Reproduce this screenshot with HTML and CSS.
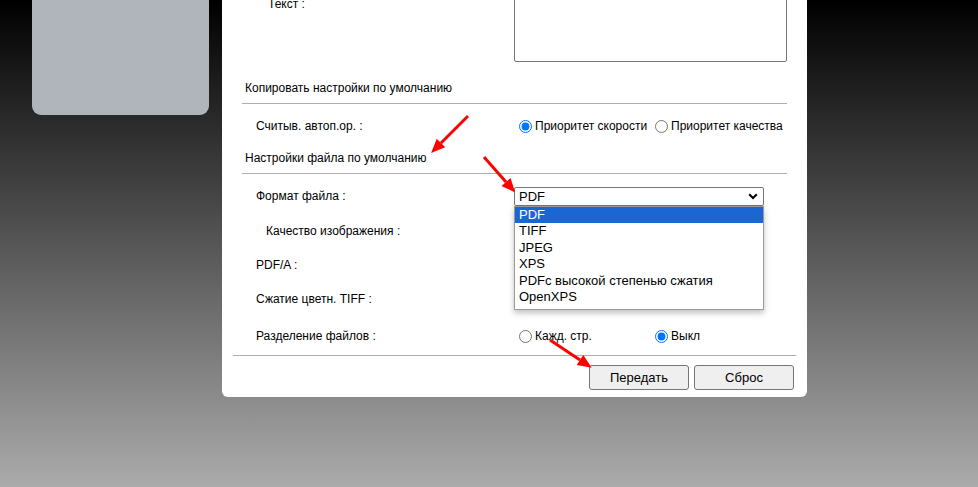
FILE: index.html
```html
<!DOCTYPE html>
<html lang="ru">
<head>
<meta charset="utf-8">
<title>Настройки</title>
<link rel="stylesheet" href="styles.css">
</head>
<body>
<div class="page">
  <aside class="side"></aside>
  <main class="panel">
    <div class="row row-text">
      <span class="lbl lbl-text">Текст :</span>
      <textarea class="ta"></textarea>
    </div>
    <div class="sect sect-1">Копировать настройки по умолчанию</div>
    <div class="row r-auto">
      <span class="lbl">Считыв. автоп.ор. :</span>
      <div class="opts">
        <label class="opt"><input type="radio" name="auto" checked>Приоритет скорости</label>
        <label class="opt"><input type="radio" name="auto">Приоритет качества</label>
      </div>
    </div>
    <div class="sect sect-2">Настройки файла по умолчанию</div>
    <div class="row r-fmt">
      <span class="lbl">Формат файла :</span>
      <div class="sel-wrap">
        <div class="sel">
          <span>PDF</span>
          <svg class="chev" width="10" height="7" viewBox="0 0 10 7"><path d="M1.2 1.2 L5 5 L8.8 1.2" fill="none" stroke="#000" stroke-width="2"/></svg>
        </div>
        <ul class="list">
          <li class="on">PDF</li>
          <li>TIFF</li>
          <li>JPEG</li>
          <li>XPS</li>
          <li>PDFc высокой степенью сжатия</li>
          <li>OpenXPS</li>
        </ul>
      </div>
    </div>
    <div class="row r-qual"><span class="lbl lbl-sub">Качество изображения :</span></div>
    <div class="row r-pdfa"><span class="lbl">PDF/A :</span></div>
    <div class="row r-tiff"><span class="lbl">Сжатие цветн. TIFF :</span></div>
    <div class="row r-split">
      <span class="lbl">Разделение файлов :</span>
      <div class="opts">
        <label class="opt"><input type="radio" name="split">Кажд. стр.</label>
        <label class="opt"><input type="radio" name="split" checked>Выкл</label>
      </div>
    </div>
    <div class="foot">
      <button class="btn">Передать</button>
      <button class="btn">Сброс</button>
    </div>
  </main>
</div>
<svg class="arrows" width="978" height="487" viewBox="0 0 978 487">
  <defs>
    <marker id="ah" markerUnits="userSpaceOnUse" markerWidth="14" markerHeight="12" refX="0" refY="6" orient="auto" overflow="visible">
      <path d="M0 0 L14 6 L0 12 Z" fill="#f00"/>
    </marker>
  </defs>
  <line x1="468" y1="116" x2="441" y2="143" stroke="#f00" stroke-width="3" marker-end="url(#ah)"/>
  <line x1="484" y1="157" x2="506" y2="182" stroke="#f00" stroke-width="3" marker-end="url(#ah)"/>
  <line x1="550" y1="340" x2="580" y2="360" stroke="#f00" stroke-width="3" marker-end="url(#ah)"/>
</svg>
</body>
</html>
```
FILE: styles.css
```css
html {
  height: 100%;
  background: linear-gradient(#000000, #ababab);
}
body {
  margin: 0;
  height: 487px;
  overflow: hidden;
  position: relative;
  font-family: "Liberation Sans", Arial, sans-serif;
  font-size: 12px;
  color: #000;
}
.page {
  display: flex;
  align-items: flex-start;
  gap: 13px;
  padding-left: 32px;
  margin-top: -40px;
}
.side {
  width: 177px;
  height: 155px;
  background: #b0b5bb;
  border-radius: 0 0 9px 9px;
}
.panel {
  width: 545px;
  padding: 0 20px;
  background: #fff;
  border-radius: 0 0 6px 6px;
}
.row {
  display: flex;
  align-items: center;
  height: 34px;
}
.lbl {
  width: 258px;
  padding-left: 14px;
  line-height: 16px;
  flex: none;
}
.row-text {
  height: 102px;
  align-items: flex-start;
}
.lbl-text {
  width: 246px;
  padding-left: 26px;
  margin-top: 36px;
}
.lbl-sub {
  width: 248px;
  padding-left: 24px;
}
.ta {
  width: 273px;
  height: 102px;
  box-sizing: border-box;
  margin: 0;
  border: 1px solid #767676;
  border-radius: 0 0 2px 2px;
  resize: none;
  display: block;
}
.sect {
  padding-left: 3px;
  line-height: 16px;
  border-bottom: 1px solid #adadad;
}
.sect-1 {
  padding-top: 18px;
  padding-bottom: 7px;
}
.sect-2 {
  padding-top: 7px;
  padding-bottom: 7px;
}
.r-auto { margin-top: 5px; }
.r-fmt { margin-top: 5px; }
.r-qual { height: 35px; }
.r-split { margin-top: 3px; }
.opts {
  display: flex;
}
.opt {
  width: 136px;
  display: flex;
  align-items: center;
  white-space: nowrap;
  line-height: 16px;
}
.opt input {
  margin: 1px 3px 0 5px;
  width: 13px;
  height: 13px;
}
.sel-wrap {
  position: relative;
  width: 250px;
}
.sel {
  height: 19px;
  box-sizing: border-box;
  border: 1px solid #767676;
  border-radius: 2px;
  display: flex;
  align-items: center;
  justify-content: space-between;
  padding: 0 5px 0 4px;
  font-size: 13px;
}
.chev { display: block; }
.list {
  position: absolute;
  top: 19px;
  left: 0;
  width: 250px;
  box-sizing: border-box;
  margin: 0;
  padding: 0 0 3px;
  list-style: none;
  background: #fff;
  border: 1px solid #9a9a9a;
  box-shadow: 0 3px 6px rgba(0, 0, 0, 0.25);
  font-size: 13px;
  z-index: 2;
}
.list li {
  height: 16.6px;
  line-height: 16.6px;
  padding-left: 4px;
}
.list li.on {
  background: #1a67d3;
  color: #fff;
}
.foot {
  margin: 2px -9px 0;
  border-top: 1px solid #adadad;
  padding: 9px 2px 7px;
  display: flex;
  justify-content: flex-end;
  gap: 5px;
}
.btn {
  width: 100px;
  height: 25px;
  margin: 0;
  border: 1px solid #767676;
  border-radius: 3px;
  background: #efefef;
  font-family: "Liberation Sans", Arial, sans-serif;
  font-size: 13px;
  color: #000;
}
.arrows {
  position: absolute;
  left: 0;
  top: 0;
  pointer-events: none;
}
```
